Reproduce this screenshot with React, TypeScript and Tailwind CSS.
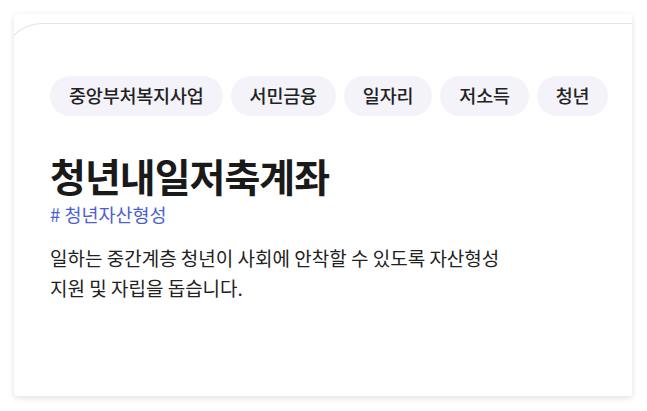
const tags = ['중앙부처복지사업', '서민금융', '일자리', '저소득', '청년'];

export default function App() {
  return (
    <div
      className="h-[411px] w-[647px] bg-white pl-[14px] pt-[14px]"
      style={{ fontFamily: '"Noto Sans CJK KR", "Noto Sans", sans-serif' }}
    >
      <div className="relative h-[382px] w-[618px] overflow-hidden rounded-[3px] bg-white shadow-[0_2px_6px_rgba(0,0,0,0.12)]">
        <div className="pointer-events-none absolute left-[-12px] top-[9px] h-[400px] w-[700px] rounded-tl-[40px] border-l border-t border-[#e4e4e8]" />

        <div className="relative flex flex-col px-[36px] pt-[62px]">
          <div className="flex gap-[8px]">
            {tags.map((tag) => (
              <span
                key={tag}
                className="flex h-[40px] shrink-0 items-center whitespace-nowrap rounded-full bg-[#f4f3fa] px-[19px] text-[18.5px] font-medium tracking-[-0.2px] text-[#222]"
              >
                {tag}
              </span>
            ))}
          </div>

          <h1 className="mt-[34px] text-[39px] font-bold leading-[50px] tracking-[-1px] text-[#1a1a1a]">
            청년내일저축계좌
          </h1>
          <p className="mt-[3px] text-[18.5px] leading-[22px] text-[#4b5fd1]"># 청년자산형성</p>

          <p className="mt-[18px] whitespace-nowrap text-[19px] leading-[30px] text-[#222]">
            일하는 중간계층 청년이 사회에 안착할 수 있도록 자산형성
            <br />
            지원 및 자립을 돕습니다.
          </p>
        </div>
      </div>
    </div>
  );
}
